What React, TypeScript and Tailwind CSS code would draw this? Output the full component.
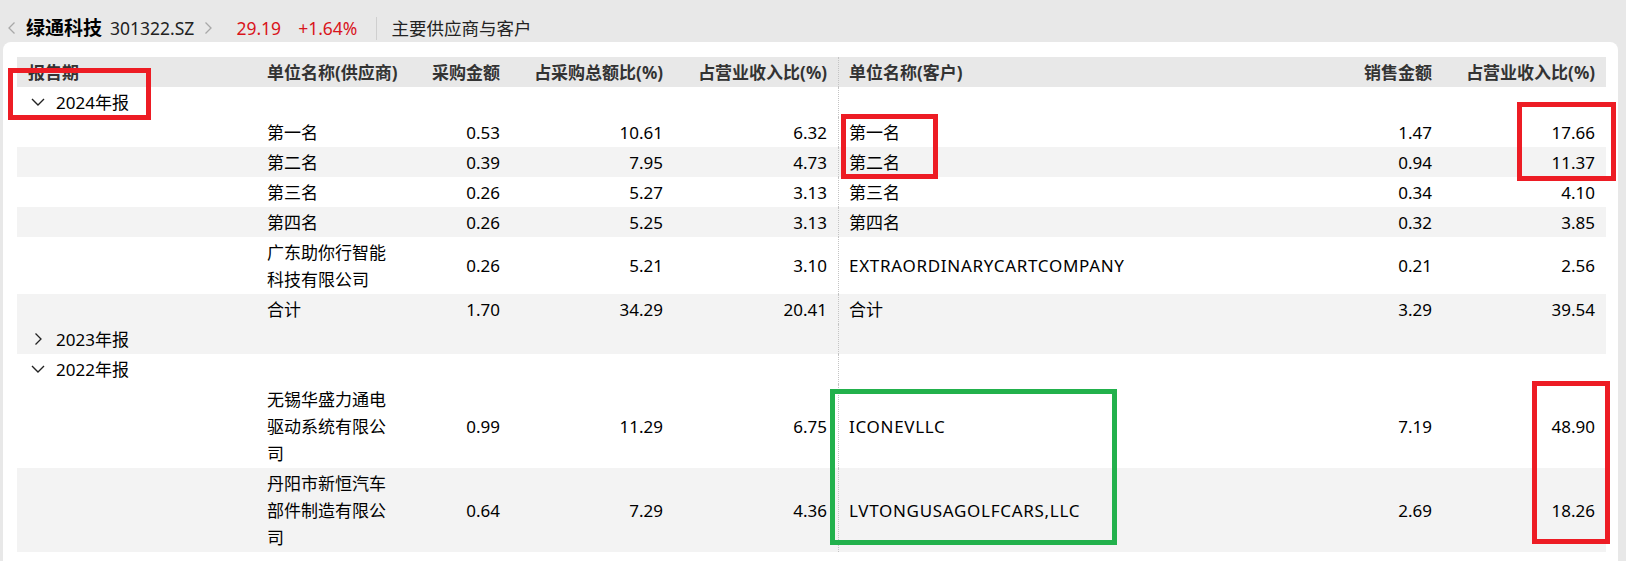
import React from "react";

type GroupRow = { kind: "group"; label: string; open: boolean; stripe: boolean };
type DataRow = {
  kind: "data";
  s: string;
  a: string;
  b: string;
  c: string;
  cu: string;
  d: string;
  e: string;
  stripe: boolean;
  latin?: boolean;
};
type Row = GroupRow | DataRow;

const rows: Row[] = [
  { kind: "group", label: "2024年报", open: true, stripe: false },
  { kind: "data", s: "第一名", a: "0.53", b: "10.61", c: "6.32", cu: "第一名", d: "1.47", e: "17.66", stripe: false },
  { kind: "data", s: "第二名", a: "0.39", b: "7.95", c: "4.73", cu: "第二名", d: "0.94", e: "11.37", stripe: true },
  { kind: "data", s: "第三名", a: "0.26", b: "5.27", c: "3.13", cu: "第三名", d: "0.34", e: "4.10", stripe: false },
  { kind: "data", s: "第四名", a: "0.26", b: "5.25", c: "3.13", cu: "第四名", d: "0.32", e: "3.85", stripe: true },
  { kind: "data", s: "广东助你行智能科技有限公司", a: "0.26", b: "5.21", c: "3.10", cu: "EXTRAORDINARYCARTCOMPANY", d: "0.21", e: "2.56", stripe: false, latin: true },
  { kind: "data", s: "合计", a: "1.70", b: "34.29", c: "20.41", cu: "合计", d: "3.29", e: "39.54", stripe: true },
  { kind: "group", label: "2023年报", open: false, stripe: true },
  { kind: "group", label: "2022年报", open: true, stripe: false },
  { kind: "data", s: "无锡华盛力通电驱动系统有限公司", a: "0.99", b: "11.29", c: "6.75", cu: "ICONEVLLC", d: "7.19", e: "48.90", stripe: false, latin: true },
  { kind: "data", s: "丹阳市新恒汽车部件制造有限公司", a: "0.64", b: "7.29", c: "4.36", cu: "LVTONGUSAGOLFCARS,LLC", d: "2.69", e: "18.26", stripe: true, latin: true },
];

const GRID = "grid grid-cols-[239px_156px_99px_163px_164px_1fr_100px_163px]";
const CELL = "flex items-center px-[11px] py-[1.5px] leading-[27px] min-h-[30px]";
const SEP = "border-l border-dotted border-[#c4c4c4] pl-[10px]";

function ChevronLeft() {
  return (
    <svg width="9" height="14" viewBox="0 0 9 14" fill="none">
      <path d="M7.5 1.5 L2 7 L7.5 12.5" stroke="#a8a8a8" strokeWidth="1.3" />
    </svg>
  );
}
function ChevronRight({ color = "#a8a8a8" }: { color?: string }) {
  return (
    <svg width="9" height="14" viewBox="0 0 9 14" fill="none">
      <path d="M1.5 1.5 L7 7 L1.5 12.5" stroke={color} strokeWidth="1.3" />
    </svg>
  );
}
function ChevronDown() {
  return (
    <svg width="14" height="8" viewBox="0 0 14 8" fill="none">
      <path d="M1 1 L7 7 L13 1" stroke="#222" strokeWidth="1.4" />
    </svg>
  );
}

function Header() {
  return (
    <div className={`${GRID} bg-[#e8e8e8] font-bold text-[#333]`}>
      <div className={CELL}>报告期</div>
      <div className={CELL}>单位名称(供应商)</div>
      <div className={`${CELL} justify-end`}>采购金额</div>
      <div className={`${CELL} justify-end`}>占采购总额比(%)</div>
      <div className={`${CELL} justify-end`}>占营业收入比(%)</div>
      <div className={`${CELL} ${SEP}`}>单位名称(客户)</div>
      <div className={`${CELL} justify-end`}>销售金额</div>
      <div className={`${CELL} justify-end`}>占营业收入比(%)</div>
    </div>
  );
}

function TableRow({ row }: { row: Row }) {
  const bg = row.stripe ? "bg-[#f3f3f3]" : "bg-white";
  if (row.kind === "group") {
    return (
      <div className={`${GRID} ${bg}`}>
        <div className={CELL}>
          <span className="flex w-[20px] items-center justify-center">
            {row.open ? <ChevronDown /> : <ChevronRight color="#222" />}
          </span>
          <span className="ml-[8px]">{row.label}</span>
        </div>
        <div className={CELL}></div>
        <div className={CELL}></div>
        <div className={CELL}></div>
        <div className={CELL}></div>
        <div className={`${CELL} ${SEP}`}></div>
        <div className={CELL}></div>
        <div className={CELL}></div>
      </div>
    );
  }
  return (
    <div className={`${GRID} ${bg}`}>
      <div className={CELL}></div>
      <div className={CELL}>
        <span className="break-all">{row.s}</span>
      </div>
      <div className={`${CELL} justify-end`}>{row.a}</div>
      <div className={`${CELL} justify-end`}>{row.b}</div>
      <div className={`${CELL} justify-end`}>{row.c}</div>
      <div className={`${CELL} ${SEP}`}>
        <span className={row.latin ? "tracking-[0.7px]" : ""}>{row.cu}</span>
      </div>
      <div className={`${CELL} justify-end`}>{row.d}</div>
      <div className={`${CELL} justify-end`}>{row.e}</div>
    </div>
  );
}

export default function App() {
  return (
    <div className="relative flex h-[561px] w-full flex-col overflow-hidden bg-[#e8e8e8] [font-family:'Noto_Sans','Noto_Sans_CJK_SC',sans-serif] text-black">
      {/* top bar */}
      <div className="flex h-[42px] shrink-0 items-center pl-[7px] pt-[14px] text-[17.5px] leading-[28px]">
        <ChevronLeft />
        <span className="ml-[10px] text-[19px] font-bold text-black">绿通科技</span>
        <span className="ml-[8px] text-[#222]">301322.SZ</span>
        <span className="ml-[10px]">
          <ChevronRight />
        </span>
        <span className="ml-[23px] text-[#d9141c]">29.19</span>
        <span className="ml-[17px] text-[#d9141c]">+1.64%</span>
        <span className="ml-[19px] h-[23px] w-px bg-[#cfcfcf]"></span>
        <span className="ml-[14px] text-[#222]">主要供应商与客户</span>
      </div>

      {/* card */}
      <div className="ml-[3px] mr-[8px] flex-1 rounded-t-[8px] bg-white pl-[14px] pr-[12px] pt-[15px] text-[17px]">
        <Header />
        {rows.map((r, i) => (
          <TableRow key={i} row={r} />
        ))}
      </div>

      {/* annotation overlays */}
      <div className="absolute left-[8px] top-[68px] h-[52px] w-[143px] border-[5px] border-[#ed1c24]"></div>
      <div className="absolute left-[841px] top-[114px] h-[65px] w-[97px] border-[5px] border-[#ed1c24]"></div>
      <div className="absolute left-[1517px] top-[102px] h-[79px] w-[99px] border-[5px] border-[#ed1c24]"></div>
      <div className="absolute left-[1532px] top-[381px] h-[163px] w-[78px] border-[5px] border-[#ed1c24]"></div>
      <div className="absolute left-[830px] top-[389px] h-[156px] w-[287px] border-[5px] border-[#22b14c]"></div>
    </div>
  );
}
